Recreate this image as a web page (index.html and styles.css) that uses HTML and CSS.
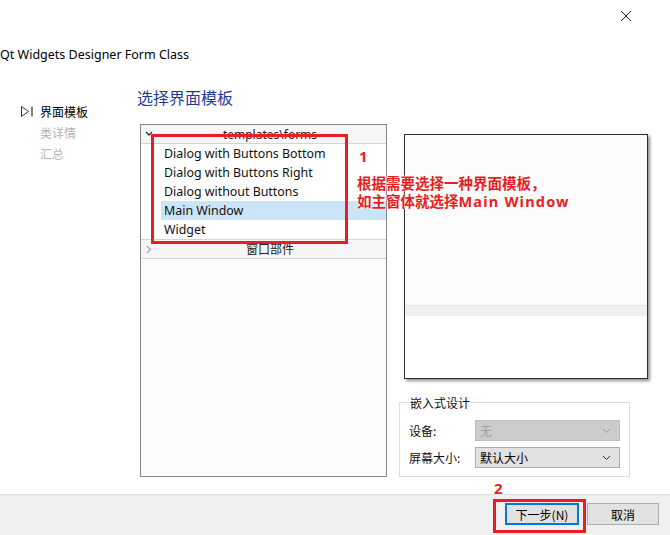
FILE: index.html
```html
<!DOCTYPE html>
<html lang="zh-CN">
<head>
<meta charset="utf-8">
<title>Qt Widgets Designer Form Class</title>
<link rel="stylesheet" href="styles.css">
</head>
<body>
<div class="dialog">
  <div class="titlebar">
    <svg class="close" width="12" height="12" viewBox="0 0 12 12"><path d="M1 1L11 11M11 1L1 11" stroke="#1a1a1a" stroke-width="1"/></svg>
  </div>
  <div class="form-title">Qt Widgets Designer Form Class</div>
  <div class="body">
    <nav class="steps">
      <div class="step current">
        <svg class="step-icon" width="14" height="11" viewBox="0 0 14 11"><path d="M1.5 0.5L8.5 5.5L1.5 10.5Z" fill="none" stroke="#333" stroke-width="1"/><path d="M12 0.5V10.5" stroke="#333" stroke-width="1.2"/></svg>
        <span>界面模板</span>
      </div>
      <div class="step">类详情</div>
      <div class="step">汇总</div>
    </nav>
    <section class="page">
      <h1 class="page-title">选择界面模板</h1>
      <div class="page-cols">
        <div class="tree">
          <div class="tree-head">
            <svg class="chev-down" width="8" height="6" viewBox="0 0 8 6"><path d="M1 1L4 4L7 1" fill="none" stroke="#333" stroke-width="1.3"/></svg>
            <span>templates\forms</span>
          </div>
          <ul class="tree-items">
            <li>Dialog with Buttons Bottom</li>
            <li>Dialog with Buttons Right</li>
            <li>Dialog without Buttons</li>
            <li class="selected">Main Window</li>
            <li>Widget</li>
          </ul>
          <div class="tree-head collapsed">
            <svg class="chev-right" width="6" height="9" viewBox="0 0 6 9"><path d="M1 1L4.5 4.5L1 8" fill="none" stroke="#aaa" stroke-width="1.3"/></svg>
            <span>窗口部件</span>
          </div>
        </div>
        <div class="side">
          <div class="preview">
            <div class="pv-client"></div>
            <div class="pv-bar"></div>
            <div class="pv-bottom"></div>
          </div>
          <div class="group">
            <span class="group-title">嵌入式设计</span>
            <div class="field">
              <label>设备:</label>
              <div class="combo disabled"><span>无</span><svg width="9" height="6" viewBox="0 0 9 6"><path d="M1 1L4.5 4.5L8 1" fill="none" stroke="#9a9a9a" stroke-width="1"/></svg></div>
            </div>
            <div class="field">
              <label>屏幕大小:</label>
              <div class="combo"><span>默认大小</span><svg width="9" height="6" viewBox="0 0 9 6"><path d="M1 1L4.5 4.5L8 1" fill="none" stroke="#333" stroke-width="1"/></svg></div>
            </div>
          </div>
        </div>
      </div>
    </section>
  </div>
  <footer class="buttons">
    <button class="btn default">下一步(N)</button>
    <button class="btn">取消</button>
  </footer>

  <div class="mark mark-list"></div>
  <div class="num num-1">1</div>
  <div class="note">根据需要选择一种界面模板，<br>如主窗体就选择<span class="latin">Main Window</span></div>
  <div class="num num-2">2</div>
  <div class="mark mark-btn"></div>
</div>
</body>
</html>
```

FILE: styles.css
```css
* { box-sizing: border-box; }
html, body { margin: 0; padding: 0; }
body {
  background: #fff;
  font-family: "Noto Sans", "Noto Sans CJK SC", sans-serif;
  color: #000;
}
.dialog {
  position: relative;
  width: 670px;
  height: 535px;
  overflow: hidden;
  background: #fff;
  display: flex;
  flex-direction: column;
}
.titlebar {
  height: 32px;
  display: flex;
  justify-content: flex-end;
  align-items: center;
  padding-right: 38px;
}
.close { display: block; }
.form-title {
  margin-top: 14px;
  height: 18px;
  line-height: 18px;
  font-size: 12.5px;
  padding-left: 0;
  color: #000;
}
.body {
  height: 408px;
  margin-top: 22px;
  display: flex;
}
.steps {
  width: 137px;
  padding-top: 15px;
  padding-left: 20px;
  font-family: "Noto Sans CJK SC", sans-serif;
  font-size: 12px;
}
.step {
  height: 21px;
  line-height: 21px;
  padding-left: 20px;
  color: #b4b4b4;
  display: flex;
  align-items: center;
}
.step.current {
  padding-left: 0;
  color: #000;
  gap: 6px;
}
.step-icon { display: block; }
.page { flex: 1; }
.page-title {
  margin: 0;
  height: 22px;
  line-height: 22px;
  font-size: 16px;
  font-weight: normal;
  color: #1f3c93;
  font-family: "Noto Sans CJK SC", sans-serif;
}
.page-cols {
  display: flex;
  margin-top: 16px;
  padding-left: 3px;
  gap: 12px;
}
.tree {
  width: 247px;
  height: 353px;
  border: 1px solid #848690;
  background: #fbfbfc;
}
.tree-head {
  position: relative;
  height: 19px;
  border-bottom: 1px solid #d4d4d8;
  background: #f6f6f7;
  display: flex;
  align-items: center;
  justify-content: center;
  padding-left: 13px;
  font-size: 12px;
  font-family: "Noto Sans", "Noto Sans CJK SC", sans-serif;
  color: #222;
}
.tree-head.collapsed {
  border-top: 1px solid #d4d4d8;
  height: 20px;
}
.chev-down { position: absolute; left: 4px; top: 6px; }
.chev-right { position: absolute; left: 5px; top: 5px; }
.tree-items {
  list-style: none;
  margin: 0;
  padding: 0;
  background: #fff;
}
.tree-items li {
  height: 19px;
  line-height: 19px;
  margin-left: 20px;
  padding-left: 3px;
  font-size: 12.4px;
  color: #111;
  white-space: nowrap;
}
.tree-items li.selected { background: #cce4f7; }
.side {
  display: flex;
  flex-direction: column;
  padding-top: 10px;
}
.preview {
  margin-left: 5px;
  width: 244px;
  height: 245px;
  border: 1px solid #2e2e2e;
  box-shadow: 2px 2px 3px rgba(0,0,0,0.45);
  display: flex;
  flex-direction: column;
  background: #fff;
}
.pv-client { height: 170px; background: #fbfbfb; }
.pv-bar { height: 11px; background: #f0f0f0; border-top: 1px solid #e4e4e4; }
.pv-bottom { flex: 1; background: #fff; }
.group {
  margin-top: 23px;
  width: 231px;
  height: 75px;
  border: 1px solid #dcdcdc;
  padding: 0 9px;
  font-family: "Noto Sans CJK SC", sans-serif;
  font-size: 12px;
}
.group-title {
  display: inline-block;
  margin-top: -9px;
  height: 18px;
  line-height: 18px;
  background: #fff;
  padding: 0 1px;
  color: #111;
  vertical-align: top;
}
.field {
  display: flex;
  align-items: center;
  height: 21px;
  margin-top: 6px;
}
.group-title + .field { margin-top: 0px; }
.field label {
  width: 66px;
  color: #111;
}
.combo {
  width: 145px;
  height: 21px;
  border: 1px solid #adadad;
  background: #e1e1e1;
  display: flex;
  align-items: center;
  justify-content: space-between;
  padding: 0 8px 0 4px;
  color: #000;
}
.combo.disabled {
  background: #cccccc;
  border-color: #bfbfbf;
  color: #a0a0a0;
}
.buttons {
  height: 41px;
  margin-top: auto;
  border-top: 1px solid #dfdfdf;
  background: #f0f0f0;
  display: flex;
  justify-content: flex-end;
  align-items: flex-start;
  gap: 8px;
  padding: 8px 11px 0 0;
}
.btn {
  font-family: "Noto Sans CJK SC", sans-serif;
  font-size: 12px;
  height: 22px;
  width: 72px;
  padding: 0;
  border: 1px solid #adadad;
  background: #e1e1e1;
  color: #000;
}
.btn.default {
  width: 74px;
  border: 2px solid #0078d7;
}

/* annotation overlays */
.mark {
  position: absolute;
  border: 3px solid #ea1c24;
}
.mark-list { left: 151px; top: 134px; width: 197px; height: 110px; }
.mark-btn { left: 493px; top: 499px; width: 93px; height: 34px; }
.num {
  position: absolute;
  color: #ea1c24;
  font-family: "Noto Sans", sans-serif;
  font-weight: bold;
  font-size: 15px;
  line-height: 16px;
  text-shadow: 0 0 2px #fff, 0 0 2px #fff;
}
.num-1 { left: 359px; top: 148px; }
.num-2 { left: 494px; top: 480px; }
.note {
  position: absolute;
  left: 357px;
  top: 174px;
  color: #ea1c24;
  font-family: "Noto Sans CJK SC", sans-serif;
  font-weight: bold;
  font-size: 14.5px;
  line-height: 18px;
  white-space: nowrap;
  text-shadow: 0 0 2px #fff, 0 0 2px #fff, 0 0 1px #fff;
}
.note .latin {
  font-family: "Noto Sans", sans-serif;
  letter-spacing: 1.2px;
}
```
